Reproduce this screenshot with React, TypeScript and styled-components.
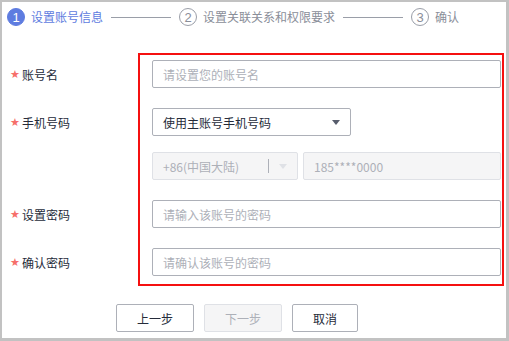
import React from "react";
import styled, { createGlobalStyle } from "styled-components";

const GlobalStyle = createGlobalStyle`
  html, body {
    margin: 0;
    padding: 0;
    background: #ffffff;
  }
  body {
    font-family: "Noto Sans CJK SC", "Liberation Sans", sans-serif;
    font-size: 12px;
    color: #252b3a;
  }
`;

const Frame = styled.div`
  box-sizing: border-box;
  width: 509px;
  height: 341px;
  border-style: solid;
  border-color: #c2c2c2;
  border-width: 2px 3px 3px 2px;
  background: #ffffff;
  padding: 6px 0 0 5px;
`;

const Stepper = styled.div`
  display: flex;
  align-items: center;
  height: 18px;
`;

const Step = styled.div`
  display: flex;
  align-items: center;
  gap: 6px;
`;

const StepCircle = styled.span<{ $active?: boolean }>`
  box-sizing: border-box;
  width: 18px;
  height: 18px;
  border-radius: 50%;
  display: flex;
  align-items: center;
  justify-content: center;
  font-family: "Liberation Sans", sans-serif;
  font-size: 13px;
  line-height: 1;
  background: ${(p) => (p.$active ? "#5e7ce0" : "#ffffff")};
  color: ${(p) => (p.$active ? "#ffffff" : "#8a8e99")};
  border: 1px solid ${(p) => (p.$active ? "#5e7ce0" : "#9a9ea8")};
`;

const StepLabel = styled.span<{ $active?: boolean }>`
  font-size: 12px;
  line-height: 18px;
  color: ${(p) => (p.$active ? "#5e7ce0" : "#8a8e99")};
`;

const Connector = styled.span`
  width: 60px;
  height: 1px;
  background: #9a9ea8;
  margin: 0 8px;
`;

const Form = styled.div`
  display: flex;
  margin-top: 27px;
  padding-left: 3px;
`;

const LabelColumn = styled.div`
  width: 128px;
  padding-top: 7px;
  display: flex;
  flex-direction: column;
`;

const FieldBox = styled.div`
  box-sizing: border-box;
  width: 366px;
  border: 2px solid #f51010;
  padding: 5px 1px 8px 12px;
  display: flex;
  flex-direction: column;
`;

const Row = styled.div<{ $gap?: number }>`
  height: 28px;
  margin-top: ${(p) => p.$gap ?? 0}px;
  display: flex;
  align-items: center;
  gap: 5px;
`;

const Label = styled.span`
  display: flex;
  align-items: center;
  gap: 4px;
  color: #252b3a;
`;

const Star = styled.span`
  color: #f66f6a;
  font-family: "DejaVu Sans", sans-serif;
  font-size: 11px;
  width: 8px;
`;

const Input = styled.div<{ $width?: number; $disabled?: boolean }>`
  box-sizing: border-box;
  height: 28px;
  width: ${(p) => (p.$width ? `${p.$width}px` : "100%")};
  flex: ${(p) => (p.$width ? "none" : "1")};
  border: 1px solid ${(p) => (p.$disabled ? "#dfe1e6" : "#adb0b8")};
  background: ${(p) => (p.$disabled ? "#f5f5f6" : "#ffffff")};
  border-radius: 2px;
  padding: 0 10px;
  display: flex;
  align-items: center;
  justify-content: space-between;
`;

const Placeholder = styled.span`
  color: #adb0b8;
`;

const Value = styled.span`
  color: #252b3a;
`;

const Caret = styled.span<{ $muted?: boolean }>`
  width: 0;
  height: 0;
  border-left: 4px solid transparent;
  border-right: 4px solid transparent;
  border-top: 5px solid ${(p) => (p.$muted ? "#dfe1e6" : "#575d6c")};
`;

const CaretGroup = styled.span`
  display: flex;
  align-items: center;
  gap: 10px;
`;

const Divider = styled.span`
  width: 1px;
  height: 14px;
  background: #adb0b8;
`;

const Actions = styled.div`
  display: flex;
  gap: 10px;
  margin-top: 18px;
  padding-left: 109px;
`;

const Button = styled.button<{ $width: number; $disabled?: boolean }>`
  box-sizing: border-box;
  width: ${(p) => p.$width}px;
  height: 28px;
  border-radius: 2px;
  border: 1px solid ${(p) => (p.$disabled ? "#dfe1e6" : "#adb0b8")};
  background: ${(p) => (p.$disabled ? "#f5f5f6" : "#ffffff")};
  color: ${(p) => (p.$disabled ? "#adb0b8" : "#252b3a")};
  font-family: "Noto Sans CJK SC", sans-serif;
  font-size: 12px;
  padding: 0;
`;

const steps = ["设置账号信息", "设置关联关系和权限要求", "确认"];

const App: React.FC = () => {
  return (
    <>
      <GlobalStyle />
      <Frame>
        <Stepper>
          {steps.map((s, i) => (
            <React.Fragment key={s}>
              {i > 0 && <Connector />}
              <Step>
                <StepCircle $active={i === 0}>{i + 1}</StepCircle>
                <StepLabel $active={i === 0}>{s}</StepLabel>
              </Step>
            </React.Fragment>
          ))}
        </Stepper>

        <Form>
          <LabelColumn>
            <Row>
              <Label>
                <Star>★</Star>账号名
              </Label>
            </Row>
            <Row $gap={20}>
              <Label>
                <Star>★</Star>手机号码
              </Label>
            </Row>
            <Row $gap={16} />
            <Row $gap={20}>
              <Label>
                <Star>★</Star>设置密码
              </Label>
            </Row>
            <Row $gap={20}>
              <Label>
                <Star>★</Star>确认密码
              </Label>
            </Row>
          </LabelColumn>

          <FieldBox>
            <Row>
              <Input>
                <Placeholder>请设置您的账号名</Placeholder>
              </Input>
            </Row>
            <Row $gap={20}>
              <Input $width={199}>
                <Value>使用主账号手机号码</Value>
                <Caret />
              </Input>
            </Row>
            <Row $gap={16}>
              <Input $width={146} $disabled>
                <Placeholder>+86(中国大陆)</Placeholder>
                <CaretGroup>
                  <Divider />
                  <Caret $muted />
                </CaretGroup>
              </Input>
              <Input $disabled>
                <Placeholder>185****0000</Placeholder>
              </Input>
            </Row>
            <Row $gap={20}>
              <Input>
                <Placeholder>请输入该账号的密码</Placeholder>
              </Input>
            </Row>
            <Row $gap={20}>
              <Input>
                <Placeholder>请确认该账号的密码</Placeholder>
              </Input>
            </Row>
          </FieldBox>
        </Form>

        <Actions>
          <Button $width={78}>上一步</Button>
          <Button $width={78} $disabled>
            下一步
          </Button>
          <Button $width={66}>取消</Button>
        </Actions>
      </Frame>
    </>
  );
};

export default App;
